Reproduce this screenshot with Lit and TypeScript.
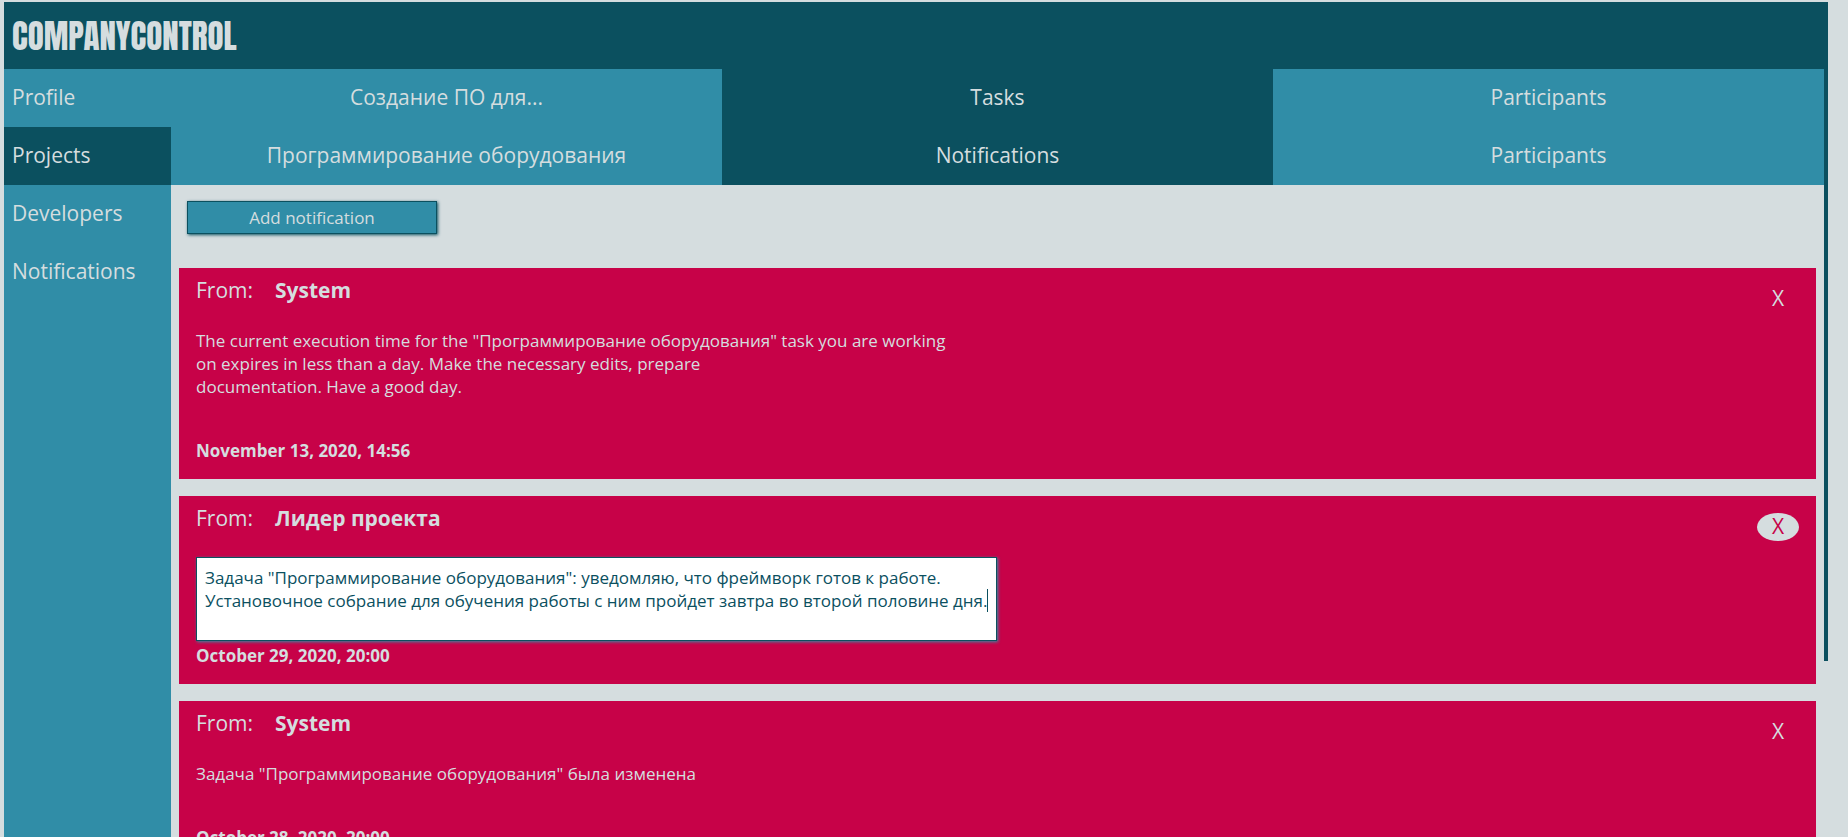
import { LitElement, html, css } from "lit";
import { customElement, property, state } from "lit/decorators.js";
import { classMap } from "lit/directives/class-map.js";

interface Notice {
  from: string;
  lines: string[];
  date: string;
  editing?: boolean;
}

@customElement("notice-card")
class NoticeCard extends LitElement {
  @property({ attribute: false }) notice!: Notice;

  static styles = css`
    :host {
      display: block;
    }
    .card {
      display: flex;
      justify-content: space-between;
      align-items: flex-start;
      padding: 0 17px 17px;
      background: #c70248;
      color: #d5dddf;
    }
    .body {
      display: flex;
      flex-direction: column;
      width: 801px;
      max-width: 85%;
      padding-top: 7px;
    }
    .from {
      display: flex;
      gap: 22px;
      margin: 0 0 24px;
      font-size: 21px;
      line-height: 30px;
      font-weight: 400;
    }
    .name {
      font-weight: 700;
    }
    .message {
      margin: 0 0 41px;
      font-size: 17px;
      line-height: 23px;
    }
    .line {
      display: block;
    }
    .editor {
      position: relative;
      display: flex;
      margin-bottom: 3px;
    }
    .field {
      flex: 1;
      box-sizing: border-box;
      margin: 0;
      padding: 8px;
      border: 1px solid #0b505f;
      border-radius: 0;
      outline: none;
      resize: none;
      overflow: hidden;
      background: #fff;
      color: #0b505f;
      box-shadow: 1px 1px 3px #308da7;
      font: 17px/23px "Open Sans", "Noto Sans", sans-serif;
      height: 84px;
      white-space: pre;
    }
    .caret {
      position: absolute;
      left: 791px;
      top: 32px;
      width: 1px;
      height: 23px;
      background: #0b505f;
    }
    .date {
      font-size: 17px;
      line-height: 23px;
      font-weight: 700;
    }
    .close {
      box-sizing: border-box;
      width: 42px;
      height: 28px;
      margin-top: 17px;
      padding: 0 0 2px;
      border: 0;
      border-radius: 50%;
      background: transparent;
      color: #d5dddf;
      font: 21px/26px "Open Sans", "Noto Sans", sans-serif;
      cursor: pointer;
    }
    .close.active,
    .close:hover {
      background: #d5dddf;
      color: #c70248;
    }
  `;

  render() {
    const n = this.notice;
    return html`
      <article class="card">
        <div class="body">
          <h2 class="from"><span>From:</span><span class="name">${n.from}</span></h2>
          ${n.editing
            ? html`<div class="editor">
                <textarea class="field" aria-label="Notification text" spellcheck="false" .value=${n.lines.join("\n")}></textarea>
                <span class="caret"></span>
              </div>`
            : html`<p class="message">${n.lines.map((l) => html`<span class="line">${l}</span>`)}</p>`}
          <time class="date">${n.date}</time>
        </div>
        <button class=${classMap({ close: true, active: !!n.editing })} type="button">X</button>
      </article>
    `;
  }
}

@customElement("app-root")
class AppRoot extends LitElement {
  @state() private notices: Notice[] = [
    {
      from: "System",
      lines: [
        'The current execution time for the "Программирование оборудования" task you are working',
        "on expires in less than a day. Make the necessary edits, prepare",
        "documentation. Have a good day.",
      ],
      date: "November 13, 2020, 14:56",
    },
    {
      from: "Лидер проекта",
      lines: [
        'Задача "Программирование оборудования": уведомляю, что фреймворк готов к работе.',
        "Установочное собрание для обучения работы с ним пройдет завтра во второй половине дня.",
      ],
      date: "October 29, 2020, 20:00",
      editing: true,
    },
    {
      from: "System",
      lines: ['Задача "Программирование оборудования" была изменена'],
      date: "October 28, 2020, 20:00",
    },
  ];

  private menu = ["Profile", "Projects", "Developers", "Notifications"];
  private tabs = [
    ["Создание ПО для...", "Tasks", "Participants"],
    ["Программирование оборудования", "Notifications", "Participants"],
  ];

  static styles = css`
    :host {
      display: block;
      height: 100vh;
      overflow: hidden;
      box-sizing: border-box;
      padding: 2px 20px 0 4px;
      background: #d5dddf;
      color: #d5dddf;
      font-family: "Open Sans", "Noto Sans", sans-serif;
    }
    .header {
      display: flex;
      align-items: center;
      height: 67px;
      padding: 0 8px;
      background: #0b505f;
    }
    .logo {
      margin: 0;
      font: 400 33px/40px Anton, Impact, "Open Sans Condensed", "Roboto Condensed", "Liberation Sans Narrow", sans-serif;
    }
    .layout {
      display: grid;
      grid-template-columns: 167px minmax(0, 1fr) 4px;
      min-height: calc(100vh - 69px);
    }
    .menu {
      background: #308da7;
    }
    .link {
      display: block;
      padding: 13px 8px 15px;
      color: inherit;
      font-size: 21px;
      line-height: 30px;
      text-decoration: none;
      white-space: nowrap;
    }
    .tabs {
      display: grid;
      grid-template-columns: repeat(3, 1fr);
      background: #308da7;
      text-align: center;
    }
    .selected {
      background: #0b505f;
    }
    .content {
      padding: 16px 8px 0;
    }
    .add {
      display: block;
      width: 250px;
      height: 33px;
      margin: 0 8px 34px;
      padding: 0;
      border: 1px solid #0b505f;
      background: #308da7;
      box-shadow: 1px 1px 3px #0b505f;
      color: inherit;
      font: 17px/23px "Open Sans", "Noto Sans", sans-serif;
      cursor: pointer;
    }
    .list {
      display: flex;
      flex-direction: column;
      gap: 17px;
    }
    .rail {
      height: calc(79vh - 69px);
      background: #0b505f;
    }
  `;

  render() {
    return html`
      <header class="header"><h1 class="logo">COMPANYCONTROL</h1></header>
      <div class="layout">
        <nav class="menu">
          ${this.menu.map(
            (m) => html`<a href="#" class=${classMap({ link: true, selected: m === "Projects" })}>${m}</a>`
          )}
        </nav>
        <main>
          ${this.tabs.map(
            (row) => html`<nav class="tabs">
              ${row.map((t, i) => html`<a href="#" class=${classMap({ link: true, selected: i === 1 })}>${t}</a>`)}
            </nav>`
          )}
          <section class="content">
            <button class="add" type="button">Add notification</button>
            <div class="list">
              ${this.notices.map((n) => html`<notice-card .notice=${n}></notice-card>`)}
            </div>
          </section>
        </main>
        <div class="rail"></div>
      </div>
    `;
  }
}
